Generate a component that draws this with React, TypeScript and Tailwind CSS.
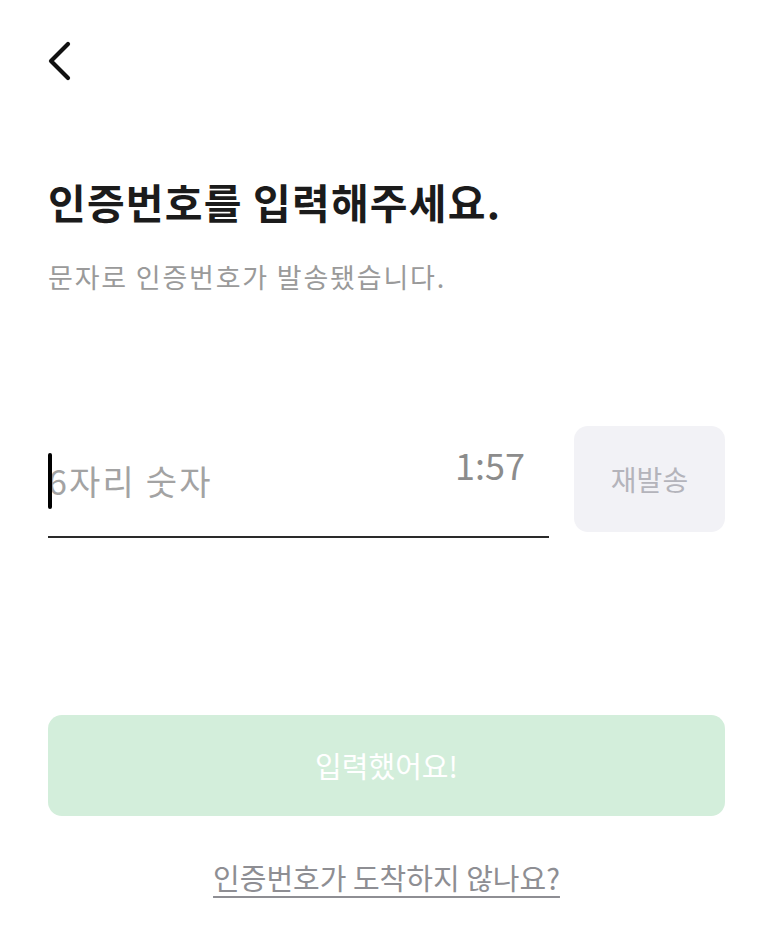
import React from "react";

const font = { fontFamily: '"Noto Sans CJK KR", "Noto Sans", sans-serif' };

const BackIcon = () => (
  <svg width="28" height="40" viewBox="0 0 28 40" fill="none">
    <path
      d="M22 3L5 20L22 37"
      stroke="#111"
      strokeWidth="4.2"
      strokeLinecap="round"
      strokeLinejoin="round"
    />
  </svg>
);

const App = () => {
  return (
    <div
      className="w-[773px] h-[925px] bg-white flex flex-col px-[48px]"
      style={font}
    >
      <button className="mt-[41px] w-[28px] h-[40px] -ml-[2px]">
        <BackIcon />
      </button>

      <h1 className="mt-[92px] text-[41px] leading-[56px] font-bold text-[#1b1b1b] tracking-[1.2px]">
        인증번호를 입력해주세요.
      </h1>
      <p className="mt-[30px] text-[27px] leading-[36px] text-[#9a9a9a] tracking-[1.8px]">
        문자로 인증번호가 발송됐습니다.
      </p>

      <div className="mt-[131px] flex items-start gap-[25px]">
        <div className="flex-1 h-[112px] flex items-center justify-between border-b-2 border-[#2a2a2a] pr-[24px]">
          <div className="relative flex items-center h-[56px]">
            <span className="absolute left-0 top-0 w-[4px] h-[56px] rounded-full bg-black" />
            <span className="text-[34px] leading-[44px] text-[#a3a3a3] tracking-[2.2px]">
              6자리 숫자
            </span>
          </div>
          <span className="mb-[34px] text-[36px] leading-[40px] text-[#8c8c8c]">
            1:57
          </span>
        </div>
        <button className="w-[151px] h-[106px] rounded-[14px] bg-[#f2f2f6] text-[28px] text-[#b4b4bb]">
          재발송
        </button>
      </div>

      <button className="mt-[177px] w-full h-[101px] rounded-[14px] bg-[#d3eedb] text-[29px] text-white">
        입력했어요!
      </button>

      <div className="mt-[41px] flex justify-center">
        <a
          href="#"
          className="text-[29px] leading-[40px] text-[#8e8e93] underline underline-offset-[6px] decoration-2"
        >
          인증번호가 도착하지 않나요?
        </a>
      </div>
    </div>
  );
};

export default App;
